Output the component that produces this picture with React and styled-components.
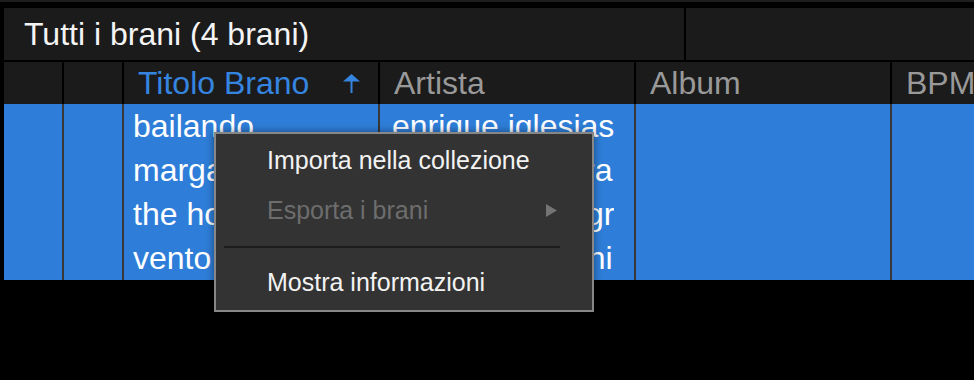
import React from "react";
import styled, { createGlobalStyle } from "styled-components";

const GlobalStyle = createGlobalStyle`
  html, body {
    margin: 0;
    padding: 0;
    background: #000;
    overflow: hidden;
  }
  body {
    font-family: "Liberation Sans", Arial, Helvetica, sans-serif;
  }
`;

const COLUMNS = "58px 58px 254px 254px 254px 1fr";

const Page = styled.div`
  position: relative;
  width: 974px;
  height: 380px;
  overflow: hidden;
  background: #000;
`;

const TopStrip = styled.div`
  height: 2px;
  background: #1e1e1e;
  margin-bottom: 6px;
`;

const Table = styled.div`
  padding-left: 4px;
  display: flex;
  flex-direction: column;
`;

const TitleBar = styled.div`
  display: flex;
  gap: 2px;
  height: 52px;
  margin-bottom: 2px;
`;

const TitleCell = styled.div`
  flex: 0 0 680px;
  box-sizing: border-box;
  background: #1b1b1b;
  padding: 0 20px;
  color: #f4f4f4;
  font-size: 32px;
  line-height: 52px;
  white-space: nowrap;
`;

const TitleFiller = styled.div`
  flex: 1;
  background: #1b1b1b;
`;

const HeaderRow = styled.div`
  display: grid;
  grid-template-columns: ${COLUMNS};
  gap: 2px;
  height: 42px;
`;

const HeaderCell = styled.div`
  background: #1b1b1b;
  display: flex;
  align-items: center;
  justify-content: space-between;
  padding: 0 18px 0 14px;
  color: ${(p) => (p.$active ? "#3585e0" : "#999999")};
  font-size: 32px;
  line-height: 42px;
  white-space: nowrap;
  overflow: hidden;
`;

const Body = styled.div`
  display: flex;
  flex-direction: column;
`;

const Row = styled.div`
  display: grid;
  grid-template-columns: ${COLUMNS};
  gap: 2px;
  height: 44px;
  background: #383838;
`;

const Cell = styled.div`
  background: #2e7ed9;
  color: #ffffff;
  font-size: 32px;
  line-height: 44px;
  padding: 0 ${(p) => p.$right || 0}px 0 ${(p) => p.$left || 0}px;
  overflow: hidden;
`;

const CellText = styled.span`
  display: block;
  white-space: nowrap;
  overflow: hidden;
`;

const Menu = styled.div`
  position: absolute;
  left: 214px;
  top: 132px;
  width: 380px;
  box-sizing: border-box;
  background: #333333;
  border: 2px solid #878787;
  padding: 1px 0 3px;
  box-shadow: 0 0 8px rgba(0, 0, 0, 0.45);
`;

const MenuItem = styled.div`
  display: flex;
  align-items: center;
  justify-content: space-between;
  height: 50px;
  padding: 0 35px 0 51px;
  font-size: 25px;
  line-height: 50px;
  color: ${(p) => (p.$disabled ? "#6d6d6d" : "#f2f2f2")};
`;

const Separator = styled.div`
  height: 2px;
  background: #1c1c1c;
  margin: 11px 32px 9px 8px;
`;

const SortArrow = () => (
  <svg width="17" height="19" viewBox="0 0 17 19">
    <polygon points="0,7.5 8.5,0 17,7.5" fill="#3585e0" />
    <rect x="7.5" y="6" width="2" height="13" fill="#3585e0" />
  </svg>
);

const SubArrow = () => (
  <svg width="11" height="13" viewBox="0 0 11 13">
    <polygon points="0,0 11,6.5 0,13" fill="#747474" />
  </svg>
);

const tracks = [
  { title: "bailando", artist: "enrique iglesias" },
  { title: "margarita", artist: "j balvin, shakira" },
  { title: "the house of the rising sun", artist: "bob marley e grateful dead" },
  { title: "vento d'estate", artist: "marco mengoni" },
];

export default function App() {
  return (
    <>
      <GlobalStyle />
      <Page>
        <TopStrip />
        <Table>
          <TitleBar>
            <TitleCell>Tutti i brani (4 brani)</TitleCell>
            <TitleFiller />
          </TitleBar>
          <HeaderRow>
            <HeaderCell />
            <HeaderCell />
            <HeaderCell $active>
              <span>Titolo Brano</span>
              <SortArrow />
            </HeaderCell>
            <HeaderCell>Artista</HeaderCell>
            <HeaderCell>Album</HeaderCell>
            <HeaderCell>BPM</HeaderCell>
          </HeaderRow>
          <Body>
            {tracks.map((t) => (
              <Row key={t.title}>
                <Cell />
                <Cell />
                <Cell $left={9} $right={10}>
                  <CellText>{t.title}</CellText>
                </Cell>
                <Cell $left={12} $right={20}>
                  <CellText>{t.artist}</CellText>
                </Cell>
                <Cell />
                <Cell />
              </Row>
            ))}
          </Body>
        </Table>
        <Menu>
          <MenuItem>Importa nella collezione</MenuItem>
          <MenuItem $disabled>
            <span>Esporta i brani</span>
            <SubArrow />
          </MenuItem>
          <Separator />
          <MenuItem>Mostra informazioni</MenuItem>
        </Menu>
      </Page>
    </>
  );
}
